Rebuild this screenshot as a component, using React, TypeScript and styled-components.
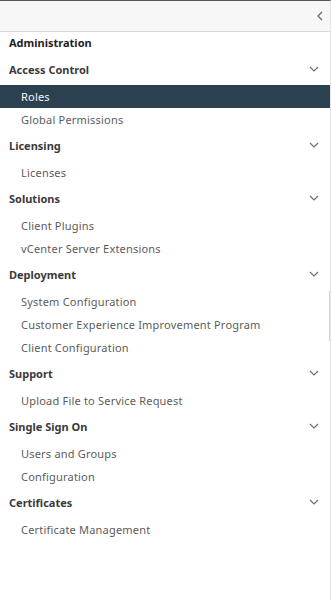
import styled, { createGlobalStyle } from "styled-components";

const GlobalStyle = createGlobalStyle`
    html, body {
        margin: 0;
        padding: 0;
        background: #ffffff;
    }
    * {
        box-sizing: border-box;
    }
`;

const StyledNav = styled.nav`
    position: relative;
    width: 331px;
    height: 600px;
    border-top: 1px solid #4a5a66;
    border-right: 1px solid #e3e3e3;
    background-color: #ffffff;
    font-family: "Noto Sans", "Liberation Sans", sans-serif;
    overflow: hidden;
`;

const StyledToggleBar = styled.div`
    height: 31px;
    background-color: #f7f7f7;
    border-bottom: 1px solid #d7d7d7;
    display: flex;
    align-items: center;
    justify-content: flex-end;
    padding-right: 5px;
`;

const StyledIconButton = styled.button`
    border: none;
    background: none;
    padding: 0;
    width: 10px;
    height: 12px;
    display: flex;
    align-items: center;
    justify-content: center;
    color: #666666;
`;

const StyledTitle = styled.div`
    height: 23px;
    display: flex;
    align-items: center;
    padding: 0 0 2px 9px;
    font-size: 11px;
    font-weight: 700;
    color: #1f1f1f;
`;

const StyledGroupHeader = styled.div`
    height: 30px;
    display: flex;
    align-items: center;
    justify-content: space-between;
    padding: 0 11px 2px 9px;
    font-size: 11px;
    font-weight: 700;
    color: #3a3a3a;
`;

const StyledItem = styled.div<{ $active?: boolean }>`
    height: 23px;
    display: flex;
    align-items: center;
    padding: 0 0 1px 21px;
    font-size: 11px;
    letter-spacing: 0.2px;
    color: ${({ $active }) => ($active ? "#f2f2f2" : "#5c5c5c")};
    background-color: ${({ $active }) => ($active ? "#2b4150" : "transparent")};
`;

const StyledScrollThumb = styled.div`
    position: absolute;
    right: -1px;
    top: 290px;
    width: 2px;
    height: 50px;
    background-color: #d4d4d4;
`;

const groups = [
    { title: "Access Control", items: ["Roles", "Global Permissions"] },
    { title: "Licensing", items: ["Licenses"] },
    { title: "Solutions", items: ["Client Plugins", "vCenter Server Extensions"] },
    {
        title: "Deployment",
        items: ["System Configuration", "Customer Experience Improvement Program", "Client Configuration"],
    },
    { title: "Support", items: ["Upload File to Service Request"] },
    { title: "Single Sign On", items: ["Users and Groups", "Configuration"] },
    { title: "Certificates", items: ["Certificate Management"] },
];

function ChevronDown() {
    return (
        <svg width="10" height="6" viewBox="0 0 10 6" fill="none">
            <path d="M1 1 L5 5 L9 1" stroke="#707070" strokeWidth="1.2" />
        </svg>
    );
}

function ChevronLeft() {
    return (
        <svg width="6" height="10" viewBox="0 0 6 10" fill="none">
            <path d="M5 1 L1 5 L5 9" stroke="#6a6a6a" strokeWidth="1.3" />
        </svg>
    );
}

export default function App() {
    return (
        <>
            <GlobalStyle />
            <StyledNav>
                <StyledToggleBar>
                    <StyledIconButton aria-label="Collapse">
                        <ChevronLeft />
                    </StyledIconButton>
                </StyledToggleBar>
                <StyledTitle>Administration</StyledTitle>
                {groups.map((group) => (
                    <div key={group.title}>
                        <StyledGroupHeader>
                            {group.title}
                            <ChevronDown />
                        </StyledGroupHeader>
                        {group.items.map((item) => (
                            <StyledItem key={item} $active={item === "Roles"}>
                                {item}
                            </StyledItem>
                        ))}
                    </div>
                ))}
                <StyledScrollThumb />
            </StyledNav>
        </>
    );
}
